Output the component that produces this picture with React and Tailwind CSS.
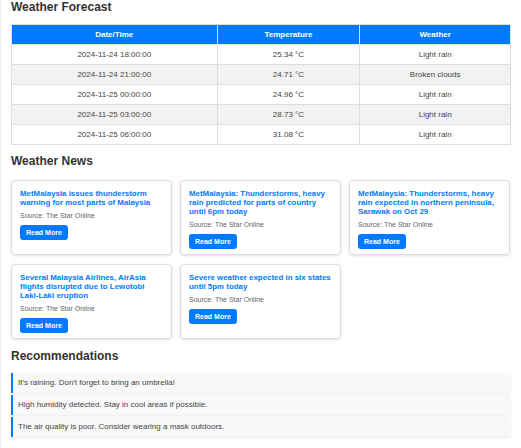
import React from "react";

const forecast = [
  ["2024-11-24 18:00:00", "25.34 °C", "Light rain"],
  ["2024-11-24 21:00:00", "24.71 °C", "Broken clouds"],
  ["2024-11-25 00:00:00", "24.96 °C", "Light rain"],
  ["2024-11-25 03:00:00", "28.73 °C", "Light rain"],
  ["2024-11-25 06:00:00", "31.08 °C", "Light rain"],
];

const news = [
  "MetMalaysia issues thunderstorm warning for most parts of Malaysia",
  "MetMalaysia: Thunderstorms, heavy rain predicted for parts of country until 6pm today",
  "MetMalaysia: Thunderstorms, heavy rain expected in northern peninsula, Sarawak on Oct 29",
  "Several Malaysia Airlines, AirAsia flights disrupted due to Lewotobi Laki-Laki eruption",
  "Severe weather expected in six states until 5pm today",
];

const tips = [
  "It's raining. Don't forget to bring an umbrella!",
  "High humidity detected. Stay in cool areas if possible.",
  "The air quality is poor. Consider wearing a mask outdoors.",
];

function App() {
  return (
    <div className="bg-[#f4f4f4] pl-[2px] font-['Liberation_Sans',Arial,sans-serif]">
      <div className="bg-white min-h-[448px] pl-[9px] pr-[8px]">
        {/* Forecast table */}
        <h2 className="text-[12px] leading-[14px] font-bold text-[#333]">Weather Forecast</h2>
        <table className="mt-[10px] border-collapse w-[500px] text-[8px] text-[#444]">
          <thead>
            <tr className="bg-[#007bff] text-white">
              <th className="w-[206px] h-[20px] border border-[#ddd] font-bold">Date/Time</th>
              <th className="w-[143px] h-[20px] border border-[#ddd] font-bold">Temperature</th>
              <th className="w-[151px] h-[20px] border border-[#ddd] font-bold">Weather</th>
            </tr>
          </thead>
          <tbody>
            {forecast.map((r, i) => (
              <tr key={i} className={i % 2 ? "bg-[#f2f2f2]" : "bg-white"}>
                {r.map((c, j) => (
                  <td key={j} className="h-[20px] border border-[#ddd] text-center">
                    {c}
                  </td>
                ))}
              </tr>
            ))}
          </tbody>
        </table>

        {/* News cards */}
        <h2 className="mt-[9px] text-[12px] leading-[14px] font-bold text-[#333]">Weather News</h2>
        <div className="mt-[12px] w-[499px] grid grid-cols-3 gap-x-[8px] gap-y-[9px]">
          {news.map((t, i) => (
            <div
              key={i}
              className="border border-[#ddd] rounded-[4px] shadow-[0_1px_3px_rgba(0,0,0,0.12)] pt-[8px] pb-[5px] pl-[8px] pr-[6px] flex flex-col items-start"
            >
              <h3 className="text-[7.9px] leading-[9px] font-bold text-[#007bff]">{t}</h3>
              <p className="mt-[5px] text-[7px] leading-[8px] text-[#666]">Source: The Star Online</p>
              <button className="mt-[5px] h-[15px] px-[6px] rounded-[3px] bg-[#007bff] text-white text-[7px] leading-[15px] font-bold">
                Read More
              </button>
            </div>
          ))}
        </div>

        {/* Recommendations */}
        <h2 className="mt-[10px] text-[12px] leading-[14px] font-bold text-[#333]">Recommendations</h2>
        <div className="mt-[10px] w-[500px] flex flex-col gap-[2px]">
          {tips.map((t, i) => (
            <div
              key={i}
              className="h-[20px] flex items-center bg-[#f8f8f8] border-l-2 border-[#007bff] rounded-r-[3px] shadow-[0_1px_2px_rgba(0,0,0,0.08)] pl-[5px] text-[8px] text-[#444]"
            >
              {t}
            </div>
          ))}
        </div>
      </div>
    </div>
  );
}

export default App;
